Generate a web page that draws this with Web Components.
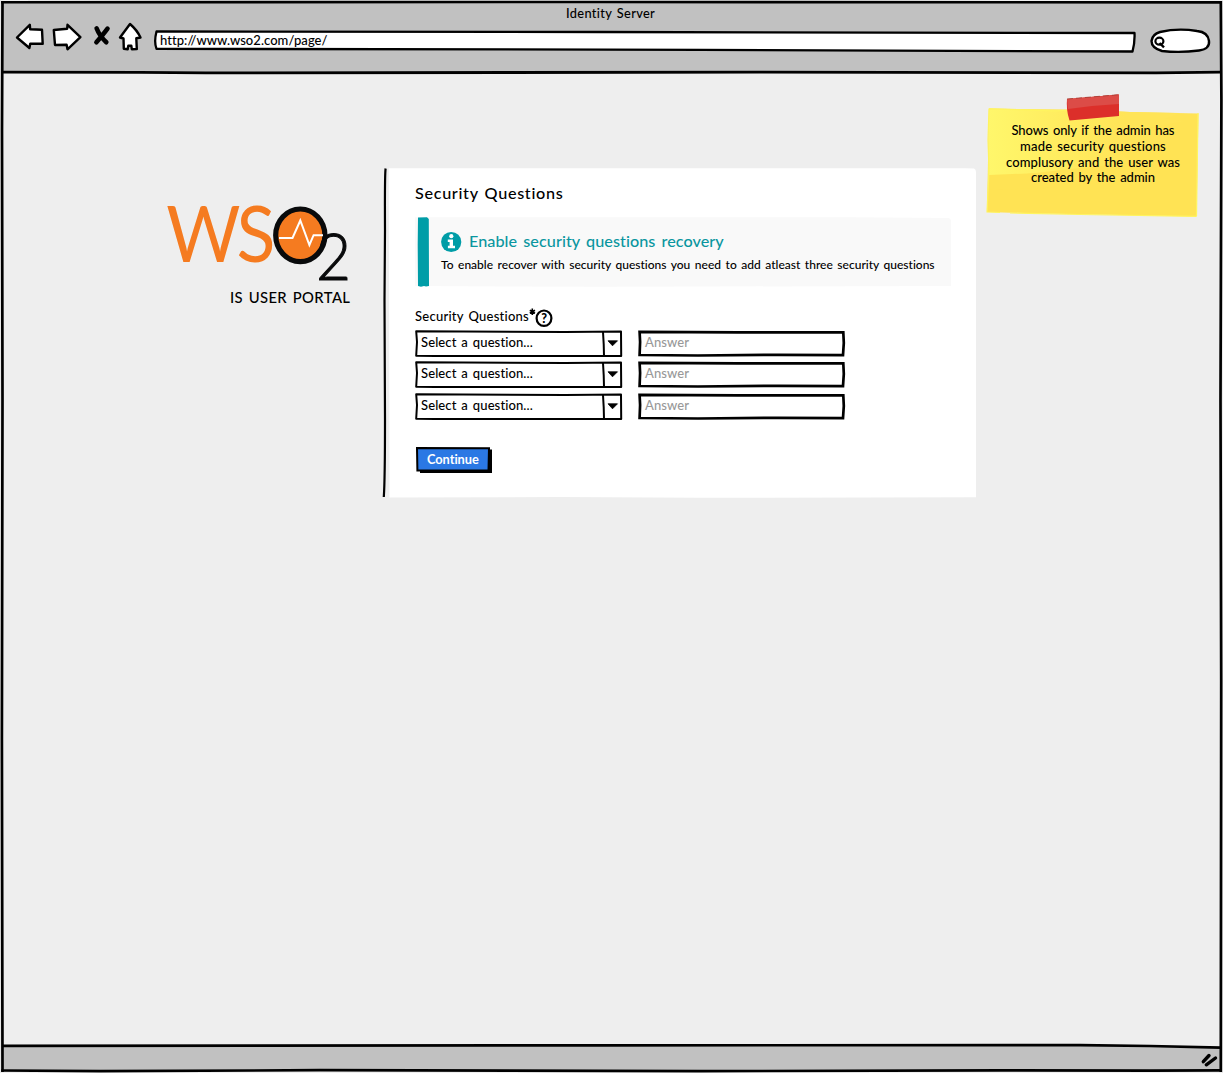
<!DOCTYPE html>
<html lang="en">
<head>
<meta charset="utf-8">
<title>Identity Server</title>
<style>
html,body{margin:0;padding:0;background:#eee}
body{font-family:Lato,"Open Sans",sans-serif;color:#000;width:1223px;height:1073px;overflow:hidden}
</style>
</head>
<body>
<sketch-browser></sketch-browser>
<script>
const define = (name, html, setup) => {
  const t = document.createElement('template');
  t.innerHTML = '<style>:host{display:block;box-sizing:border-box}*{box-sizing:border-box}svg{display:block;overflow:visible}.stack{display:grid}.stack>*{grid-area:1/1}</style>' + html;
  customElements.define(name, class extends HTMLElement {
    constructor(){ super(); this.attachShadow({mode:'open'}).appendChild(t.content.cloneNode(true)); }
    connectedCallback(){ if (setup) setup(this, this.shadowRoot); }
  });
};

/* One line of text, spaced out to the given width */
define('fit-text', `<style>:host{height:20px;line-height:20px;white-space:pre;flex:none}span{display:inline-block}</style><span></span>`, (el, root) => {
  const s = root.querySelector('span'), w = +el.getAttribute('w'), text = el.getAttribute('text');
  s.textContent = text;
  s.style.fontSize = (el.getAttribute('size') || 13) + 'px';
  s.style.fontWeight = el.getAttribute('weight') || 500;
  s.style.wordSpacing = (el.getAttribute('gap') || 1.5) + 'px';
  el.style.width = w + 'px';
  s.style.letterSpacing = ((w - s.getBoundingClientRect().width) / (text.length - 1)) + 'px';
});

define('sketch-toolbar', `<style>
:host{height:74px}
.stack{height:74px;width:1223px}
.content{display:flex;flex-direction:column}
.title{display:flex;justify-content:center;padding-top:2px;height:23px;padding-right:2px}
.row{display:flex;align-items:flex-start;padding-left:15px;height:30px}
.url{display:grid;width:983px;height:24px;margin-top:6px}
.url>*{grid-area:1/1}.url fit-text{margin:0 0 0 7px}
.search{margin:5px 0 0 14px}
</style>
<div class="stack">
<svg width="1223" height="74" fill="none" stroke="#000"><path d="M2 2H1221V73H2Z" fill="#c1c1c1" stroke="none"/><path d="M1 2.2L600 2 1222 2.4" stroke-width="2.6"/><path d="M2.5 72.2L140 72.3 206 72.9 760 72.2 1156 72.8 1221 72.2" stroke-width="2.8"/></svg>
<div class="content">
<div class="title"><fit-text w="89" text="Identity Server" size="12.8"></fit-text></div>
<div class="row">
<svg width="138" height="30" viewBox="15 23 138 30" fill="#fff" stroke="#000" stroke-width="2.4" stroke-linejoin="round" stroke-linecap="round">
<path d="M17 37.5L29.8 24.8 30.2 29.3 42 29.7 42.7 43.8 30.3 43.6 29.4 48Z"/>
<path d="M53.8 30L67.2 28.7 67.5 24.8 80.4 37.2 67.5 49.3 66.6 44.8 55 45Z"/>
<path d="M96.6 28.3Q99.5 36 106.3 42.3M107.5 28.6Q103.5 34 96.4 42.3" fill="none" stroke-width="4.6"/>
<path d="M130 24L120 37.5 123.5 38.5 123.8 48.7 127.7 49.2 128.3 45.8 131.3 45.7 131.8 49.2 136.8 49 136.3 38.3 140.5 37.5Q137 30 130 24Z"/>
</svg>
<div class="url"><svg width="983" height="24" viewBox="153 29 983 24"><path d="M156.5 31.5L600 32 1134.5 33Q1135 42 1132.5 51.5L700 49.8 156.5 48.8Q153.8 42 156.5 31.5Z" fill="#fff" stroke="#000" stroke-width="2.3" stroke-linejoin="round"/></svg><fit-text w="167" text="http://www.wso2.com/page/" size="13"></fit-text></div>
<svg class="search" width="60" height="25" viewBox="1150 28 60 25" fill="none" stroke="#000" stroke-width="2.4"><path d="M1160 32Q1178 27.8 1197 31Q1208 32 1209 41Q1210 49 1199 50.5Q1180 53 1162 51Q1151.5 48 1151.5 41Q1152.5 34 1160 32Z" fill="#fff"/><ellipse cx="1159.4" cy="41.2" rx="4" ry="3.5" stroke-width="2.2"/><path d="M1159.5 43L1164 47.3"/></svg>
</div></div></div>`);

define('wso2-brand', `<style>:host{width:184px}fit-text{margin-left:64px;margin-top:2px}</style>
<svg width="184" height="80" viewBox="166 205 184 80" font-family="Lato,sans-serif">
<text transform="translate(166.3 262) scale(.925 1)" x="0 76" y="0 0" font-size="77.5" fill="#f57b20">WS</text>
<ellipse cx="300.3" cy="235.3" rx="24.6" ry="26.3" fill="#f57b20" stroke="#090a0b" stroke-width="5.2"/>
<path d="M279 238H292.5L300.3 220.5 309.4 245 313.6 235.2H323" fill="none" stroke="#fff" stroke-width="2"/>
<text x="316" y="279.6" font-size="64.5" font-weight="300" stroke="#090a0b" stroke-width="1" fill="#090a0b" textLength="35" lengthAdjust="spacingAndGlyphs">2</text>
</svg><fit-text w="120" text="IS USER PORTAL" size="14.8"></fit-text>`);

define('info-banner', `<style>:host{width:536px;height:70px}.stack{width:536px;height:70px}
.c{display:flex;flex-direction:column;padding:14px 0 0 26px}.r{display:flex;height:22px;gap:7px}.r fit-text{color:#0a969f}</style>
<div class="stack"><svg width="536" height="70" viewBox="415 217 536 70"><path d="M415 217.3H850L949 218 951 220V286L700 286.5 600 286.8 415 286Z" fill="#f9f9f9"/><path d="M418 217.5L427 217.3 428.8 219 429 286 426 286.6 424 286 421 286.8 418 286 417.7 245Z" fill="#009da7"/></svg>
<div class="c"><div class="r"><svg width="21" height="21" viewBox="0 0 21 21"><circle cx="10.2" cy="11" r="10.1" fill="#009da7"/><circle cx="10.3" cy="5.2" r="2.1" fill="#fff"/><path d="M6.8 8.6H12V14.8H14V17.3H6.9V14.8H8.6V11H6.8Z" fill="#fff"/></svg><fit-text w="255" text="Enable security questions recovery" size="16.2" gap="2"></fit-text></div>
<fit-text w="494" text="To enable recover with security questions you need to add atleast three security questions" size="12"></fit-text></div></div>`);

define('question-select', `<style>:host{width:207px;height:27px}.stack{width:207px;height:27px}fit-text{margin:1px 0 0 6px}</style>
<div class="stack"><svg width="207" height="27" fill="#fff" stroke="#000" stroke-width="2" stroke-linejoin="round"><path d="M1.2 1.3L150 2 206 1.5 206.2 26 20 26 1.2 25.7 2 12Z"/><path d="M188 2L188.7 14 189 26" fill="none"/><path d="M193 10.8H202.5L197.5 15.8Z" fill="#000" stroke-width=".8"/></svg>
<fit-text w="112" text="Select a question..." size="13"></fit-text></div>`);

define('answer-field', `<style>:host{width:208px;height:27px}.stack{width:208px;height:27px}fit-text{margin:1px 0 0 7px;color:#999}</style>
<div class="stack"><svg width="208" height="27" fill="#fff" stroke="#000" stroke-width="2.7"><path d="M1.6 1.8L100 2.3 205.3 2.3 205.8 13 205 25.2 140 24.8 60 25.5 1.6 25 2.1 12Z"/></svg>
<fit-text w="44" text="Answer" size="13"></fit-text></div>`);

define('sketch-button', `<style>:host{width:77px;height:28px}.stack{width:77px;height:28px}fit-text{margin:2px 0 0 12px;color:#fff}</style>
<div class="stack"><svg width="77" height="28"><path d="M5 3.5H77V27H5Z"/><path d="M2 2L74 2.3 73.5 24.2 2.4 24.5Z" fill="#2b78e4" stroke="#000" stroke-width="2"/></svg><fit-text w="52" text="Continue" weight="700" size="12.8"></fit-text></div>`);

define('security-panel', `<style>:host{width:593px;height:330px}.stack{width:593px;height:330px}
.c{display:flex;flex-direction:column;padding-left:32px}
.h{margin-top:15px}info-banner{margin-top:14px}
.label{display:flex;margin-top:19px;height:24px}.label fit-text{margin-top:-1px}
.rows{display:grid;grid-template-columns:207px 208px;grid-template-rows:31px 32px 27px;column-gap:16px}
sketch-button{margin-top:26px}</style>
<div class="stack"><svg width="593" height="330" viewBox="383 168 593 330"><path d="M388.8 168.2H965L974 168.5Q976 169 976 172V497.3L700 497.8 560 497 389.5 497.5Z" fill="#fff"/><path d="M385.6 168.5Q384.7 175 385 230L384.5 300 385 420Q385 480 383.8 497" fill="none" stroke="#000" stroke-width="2.2"/></svg>
<div class="c"><fit-text class="h" w="148" text="Security Questions" size="16.2"></fit-text>
<info-banner></info-banner>
<div class="label"><fit-text w="114" text="Security Questions" size="13"></fit-text><svg width="25" height="24" viewBox="529 306 25 24"><path d="M532.3 308.5V315M529.8 310.2L535 313.2M535 310.2L529.8 313.2" stroke="#000" stroke-width="1.6"/><ellipse cx="544" cy="318.2" rx="7.4" ry="7.7" fill="#fff" stroke="#000" stroke-width="2.2"/><text x="544.1" y="322.7" text-anchor="middle" font-family="Lato,sans-serif" font-size="12.5" font-weight="900">?</text></svg></div>
<div class="rows"><question-select></question-select><answer-field></answer-field><question-select></question-select><answer-field></answer-field><question-select></question-select><answer-field></answer-field></div>
<sketch-button></sketch-button></div></div>`);

define('sticky-note', `<style>:host{width:212px;height:124px}.stack{width:212px;height:124px}.c{display:flex;flex-direction:column;align-items:center;padding-top:25px}fit-text{height:15.8px;line-height:20px}</style>
<div class="stack"><svg width="212" height="124" viewBox="987 94 212 124">
<defs><linearGradient id="y" x1="0" x2="1"><stop offset="0" stop-color="#fff76b"/><stop offset=".35" stop-color="#ffed60"/><stop offset=".7" stop-color="#ffe457"/></linearGradient></defs>
<path d="M989 108.5L1090 110 1130 112 1198.5 113.5 1196.5 216.5 1120 215 1040 213.5 987 212Z" fill="#ffe354"/>
<path d="M989 108.5L1090 110 1130 112 1180 113 1164 119 1184 121 1146 128 1168 139 1120 151 1130 163 1070 169 1000 177 988 182Z" fill="url(#y)"/>
<path d="M989 175L1040 173 1062 178 1110 175 1075 187 988 190Z" fill="#ffe354"/>
<path d="M989 108.5L988 140 989 170 987 212 1000 212.5M989 108.8L1055 111 1070 110M1010 213L1080 214.5 1196.5 216.3M1198 113L1196.5 216" fill="none" stroke="#fff45f" stroke-width="1.2"/>
<path d="M1067 99L1119 94.5 1119 116 1069.5 120.5Q1066 110 1067 99Z" fill="#dc2f2a"/><path d="M1067 99L1119 94.5 1119 104 1092 106 1068 109Z" fill="#dc4c47"/><path d="M1067 99L1119 94.7" stroke="#a33b31" stroke-dasharray="6 3" stroke-width=".8"/></svg>
<div class="c"><fit-text w="163" text="Shows only if the admin has"></fit-text><fit-text w="146" text="made security questions"></fit-text><fit-text w="174" text="complusory and the user was"></fit-text><fit-text w="124" text="created by the admin"></fit-text></div></div>`);

define('sketch-statusbar', `<style>:host{height:31px}</style><svg width="1223" height="31" viewBox="0 1042 1223 31" fill="none" stroke="#000"><path d="M2 1045.5H1120L1221 1048V1071H2Z" fill="#c1c1c1" stroke="none"/><path d="M2 1045.8L600 1045.3 1080 1045.2 1150 1046 1221 1047.7" stroke-width="2.7"/><path d="M1 1070.5L100 1071.2 320 1070.2 700 1071.2 1000 1070.3 1150 1070.7 1222 1070.3" stroke-width="2.7"/><path d="M1203.3 1061.7L1209 1055.5M1206.3 1064.8L1215.5 1058" stroke-width="3.4" stroke-linecap="round"/></svg>`);

define('sketch-browser', `<style>:host,.stack{width:1223px;height:1073px}.page{display:flex;flex-direction:column}
main{flex:1;display:flex;align-items:flex-start;padding-left:166px}
wso2-brand{margin-top:131px}security-panel{margin:94px 0 0 33px}sticky-note{margin:20px 0 0 11px}.edge{pointer-events:none}</style>
<div class="stack"><div class="page"><sketch-toolbar></sketch-toolbar><main><wso2-brand></wso2-brand><security-panel></security-panel><sticky-note></sticky-note></main><sketch-statusbar></sketch-statusbar></div>
<svg class="edge" width="1223" height="1073" fill="none" stroke="#000" stroke-width="2.7"><path d="M0 0H1.2V1073H0ZM1222.3 0H1223V1073H1222.3Z" fill="#e8e8e8" stroke="none"/><path d="M2.5 1L2 130 2.5 400 1.9 740 2.5 1072M1220.8 1L1221.4 100 1220.5 400 1221.2 680 1220.8 1072"/></svg></div>`);
</script>
</body>
</html>
